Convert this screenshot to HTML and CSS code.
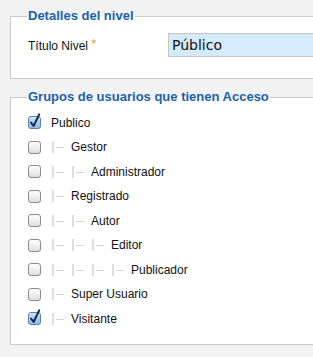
FILE: index.html
```html
<!DOCTYPE html>
<html lang="es">
<head>
<meta charset="utf-8">
<title>Nivel de acceso</title>
<link rel="stylesheet" href="styles.css">
</head>
<body>
<div class="page">
  <fieldset class="box box-details">
    <legend class="box-title">Detalles del nivel</legend>
    <div class="field">
      <label class="field-label" for="title">Título Nivel <span class="star">*</span></label>
      <input class="field-input" id="title" type="text" value="Público">
    </div>
  </fieldset>

  <fieldset class="box box-groups">
    <legend class="box-title">Grupos de usuarios que tienen Acceso</legend>
    <ul class="groups">
      <li class="group">
        <svg class="cb" width="13" height="13" viewBox="0 0 13 13"><use href="#cb-on"/></svg>
        <span class="name">Publico</span>
      </li>
      <li class="group">
        <svg class="cb" width="13" height="13" viewBox="0 0 13 13"><use href="#cb-off"/></svg>
        <span class="gi"></span><span class="name">Gestor</span>
      </li>
      <li class="group">
        <svg class="cb" width="13" height="13" viewBox="0 0 13 13"><use href="#cb-off"/></svg>
        <span class="gi"></span><span class="gi"></span><span class="name">Administrador</span>
      </li>
      <li class="group">
        <svg class="cb" width="13" height="13" viewBox="0 0 13 13"><use href="#cb-off"/></svg>
        <span class="gi"></span><span class="name">Registrado</span>
      </li>
      <li class="group">
        <svg class="cb" width="13" height="13" viewBox="0 0 13 13"><use href="#cb-off"/></svg>
        <span class="gi"></span><span class="gi"></span><span class="name">Autor</span>
      </li>
      <li class="group">
        <svg class="cb" width="13" height="13" viewBox="0 0 13 13"><use href="#cb-off"/></svg>
        <span class="gi"></span><span class="gi"></span><span class="gi"></span><span class="name">Editor</span>
      </li>
      <li class="group">
        <svg class="cb" width="13" height="13" viewBox="0 0 13 13"><use href="#cb-off"/></svg>
        <span class="gi"></span><span class="gi"></span><span class="gi"></span><span class="gi"></span><span class="name">Publicador</span>
      </li>
      <li class="group">
        <svg class="cb" width="13" height="13" viewBox="0 0 13 13"><use href="#cb-off"/></svg>
        <span class="gi"></span><span class="name">Super Usuario</span>
      </li>
      <li class="group">
        <svg class="cb" width="13" height="13" viewBox="0 0 13 13"><use href="#cb-on"/></svg>
        <span class="gi"></span><span class="name">Visitante</span>
      </li>
    </ul>
  </fieldset>
</div>

<svg class="defs" width="0" height="0" aria-hidden="true">
  <defs>
    <linearGradient id="g-off" x1="0" y1="0" x2="0" y2="1">
      <stop offset="0" stop-color="#ffffff"/>
      <stop offset="0.5" stop-color="#efefef"/>
      <stop offset="1" stop-color="#dcdcdc"/>
    </linearGradient>
    <linearGradient id="g-on" x1="0" y1="0" x2="0" y2="1">
      <stop offset="0" stop-color="#d6e8fa"/>
      <stop offset="0.5" stop-color="#a9cdf1"/>
      <stop offset="1" stop-color="#8cbbea"/>
    </linearGradient>
    <symbol id="cb-off" viewBox="0 0 13 13" overflow="visible">
      <rect x="0.5" y="0.5" width="12" height="12" rx="2.5" fill="url(#g-off)" stroke="#8c8c8c"/>
    </symbol>
    <symbol id="cb-on" viewBox="0 0 13 13" overflow="visible">
      <rect x="0.5" y="0.5" width="12" height="12" rx="2.5" fill="url(#g-on)" stroke="#5f7fa5"/>
      <path d="M3 6.5 L5.6 10 L11.2 -1.6" fill="none" stroke="#16284c" stroke-width="2" stroke-linecap="round" stroke-linejoin="round"/>
    </symbol>
  </defs>
</svg>
</body>
</html>
```

FILE: styles.css
```css
html {
  overflow: hidden;
  background: #f2f2f2;
}

body {
  margin: 0;
  padding: 8px 0 0 10px;
  font-family: "Liberation Sans", Arial, sans-serif;
  font-size: 12px;
  color: #111;
}

.page {
  display: flex;
  flex-direction: column;
}

.box {
  margin: 0;
  padding: 0 0 0 16px;
  border: 1px solid #cccccc;
  border-right-width: 0;
  background: #ffffff;
  min-width: 0;
}

.box + .box {
  margin-top: 10px;
}

.box-title {
  padding: 0 1px;
  font-size: 13px;
  line-height: 16px;
  font-weight: bold;
  color: #1c61a6;
}

.field {
  display: flex;
  align-items: center;
  margin: 9px 0 21px 1px;
}

.field-label {
  width: 140px;
  flex: none;
  font-size: 12px;
  line-height: 14px;
  padding-top: 1px;
}

.star {
  color: #e29e3a;
  font-size: 13px;
  position: relative;
  top: -2px;
}

.field-input {
  flex: 1;
  min-width: 0;
  box-sizing: border-box;
  height: 24px;
  margin: 0;
  padding: 0 3px;
  border: 1px solid #c6c6c6;
  border-right-width: 0;
  background: #d3ebfb;
  font-family: "DejaVu Sans", Verdana, sans-serif;
  font-size: 14px;
  color: #111;
  outline: none;
}

.groups {
  list-style: none;
  margin: 5.5px 0 13px 1px;
  padding: 0;
}

.group {
  display: flex;
  align-items: center;
  height: 24.5px;
}

.cb {
  flex: none;
  display: block;
  overflow: visible;
  margin-right: 10px;
}

.gi {
  flex: none;
  position: relative;
  width: 20px;
  height: 12px;
}

.gi::before {
  content: "";
  position: absolute;
  left: 1px;
  top: 0;
  width: 2px;
  height: 12px;
  background: #dedede;
}

.gi::after {
  content: "";
  position: absolute;
  left: 5px;
  top: 6px;
  width: 8px;
  height: 1px;
  background: #d4d4d4;
}

.name {
  line-height: 14px;
  white-space: nowrap;
}

.defs {
  position: absolute;
  width: 0;
  height: 0;
}
```
